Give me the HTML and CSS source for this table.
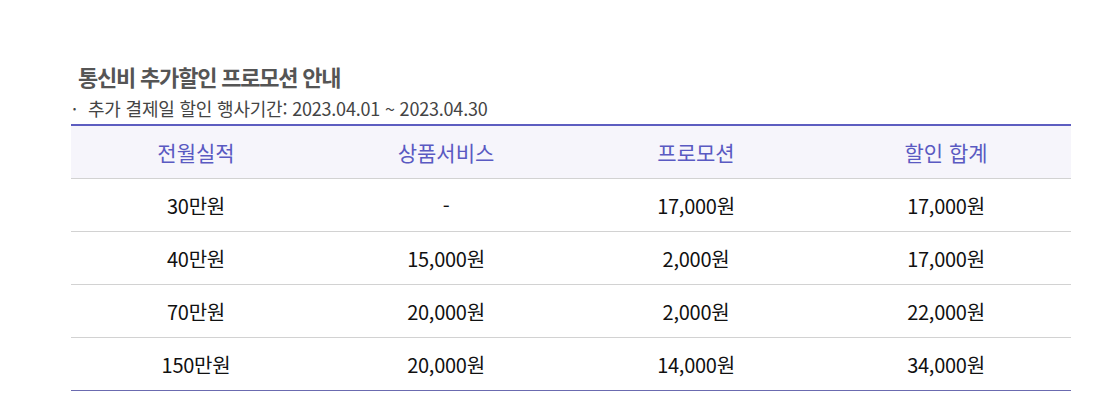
FILE: index.html
```html
<!DOCTYPE html>
<html lang="ko">
<head>
<meta charset="UTF-8">
<title>통신비 추가할인 프로모션 안내</title>
<link rel="stylesheet" href="styles.css">
</head>
<body>
<div class="promo">
    <h3 class="promo-title">통신비 추가할인 프로모션 안내</h3>
    <p class="promo-desc"><span class="dot">·</span>추가 결제일 할인 행사기간: 2023.04.01 ~ 2023.04.30</p>
    <table class="promo-table">
        <thead>
            <tr>
                <th>전월실적</th>
                <th>상품서비스</th>
                <th>프로모션</th>
                <th>할인 합계</th>
            </tr>
        </thead>
        <tbody>
            <tr><td>30만원</td><td>-</td><td>17,000원</td><td>17,000원</td></tr>
            <tr><td>40만원</td><td>15,000원</td><td>2,000원</td><td>17,000원</td></tr>
            <tr><td>70만원</td><td>20,000원</td><td>2,000원</td><td>22,000원</td></tr>
            <tr><td>150만원</td><td>20,000원</td><td>14,000원</td><td>34,000원</td></tr>
        </tbody>
    </table>
</div>
</body>
</html>
```

FILE: styles.css
```css
body {
    margin: 0;
    padding: 0;
    background-color: #fff;
    font-family: "Noto Sans CJK KR", "Noto Sans", sans-serif;
    color: #111;
}
.promo {
    width: 1000px;
    margin-left: 71px;
    padding-top: 62px;
}
.promo-title {
    margin: 0 0 0 7px;
    font-size: 22px;
    font-weight: bold;
    line-height: 28px;
    letter-spacing: -1.2px;
    color: #555;
}
.promo-desc {
    margin: 6px 0 4px 0;
    font-size: 18px;
    line-height: 24px;
    letter-spacing: -0.2px;
    color: #444;
}
.dot {
    display: inline-block;
    width: 16px;
    margin-left: 1px;
}
.promo-table {
    width: 100%;
    border-collapse: collapse;
    table-layout: fixed;
    border-top: 2px solid #5d5dc0;
    border-bottom: 1px solid #6b6bb0;
}
.promo-table th {
    height: 52px;
    padding: 0;
    background-color: #f6f5fb;
    color: #5a5ac2;
    font-size: 21px;
    font-weight: normal;
    letter-spacing: 0;
    border-bottom: 1px solid #d2d2d2;
}
.promo-table td {
    height: 52px;
    padding: 0;
    text-align: center;
    font-size: 20px;
    letter-spacing: -0.25px;
    color: #111;
    border-bottom: 1px solid #d2d2d2;
}
.promo-table tbody tr:last-child td {
    border-bottom: none;
}
```
